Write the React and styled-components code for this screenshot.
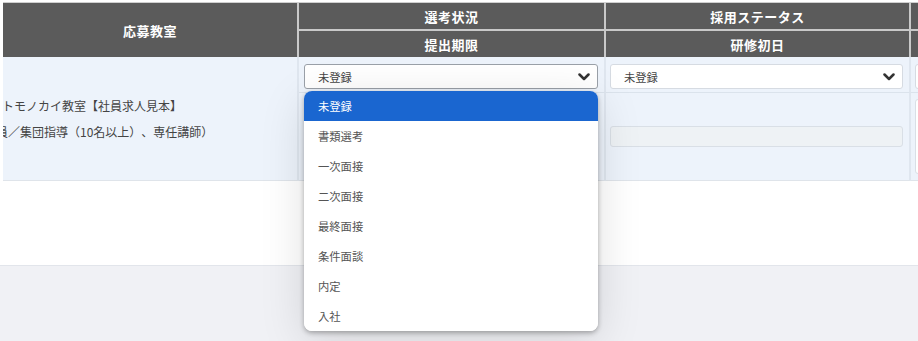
import React from "react";
import styled, { createGlobalStyle } from "styled-components";

const GlobalStyle = createGlobalStyle`
  html, body {
    margin: 0;
    padding: 0;
    background: #fff;
    font-family: "Noto Sans CJK JP", "Noto Sans", sans-serif;
    color: #444;
    text-spacing-trim: space-all;
  }
`;

const Page = styled.div`
  width: 918px;
  height: 341px;
  overflow: hidden;
  background: #fff;
  display: flex;
  flex-direction: column;
`;

const TableArea = styled.div`
  padding: 2px 0 0 3px;
`;

const Table = styled.table`
  border-collapse: separate;
  border-spacing: 0;
  table-layout: fixed;
  width: 1230px;
  border-top: 1px solid #cfcfcf;
`;

const Th = styled.th`
  background: #5b5b5b;
  color: #fff;
  font-size: 13px;
  font-weight: 700;
  height: 26px;
  padding: 0;
  text-align: center;
  border-right: 2px solid #c9c9c9;
  border-bottom: ${p => (p.$top ? "2px solid #c9c9c9" : "none")};
  letter-spacing: 0.5px;
`;

const Td = styled.td`
  background: #edf3fb;
  padding: ${p => p.$pad || "0 5px"};
  vertical-align: ${p => p.$align || "middle"};
  border-right: 2px solid #dfe6ef;
  border-bottom: ${p => (p.$sep ? "1px solid #dbe3ec" : "1px solid #dfe4ea")};
  height: ${p => p.$h}px;
  box-sizing: border-box;
`;

const ClassCell = styled(Td)`
  padding: 0;
  overflow: hidden;
  font-size: 12px;
  color: #444;
`;

const ClassLine = styled.div`
  white-space: nowrap;
  line-height: 26px;
  margin-left: ${p => p.$shift}px;
`;

const SelectWrap = styled.div`
  position: relative;
`;

const SelectBox = styled.div`
  height: 25px;
  box-sizing: border-box;
  background: #fff;
  border: 1px solid ${p => (p.$focus ? "#9aa0a8" : "#d6dbe2")};
  border-radius: 3px;
  display: flex;
  align-items: center;
  justify-content: space-between;
  padding: 0 7px 0 13px;
  font-size: 11.3px;
  color: #444;
`;

const DisabledInput = styled.div`
  height: 21px;
  box-sizing: border-box;
  background: #eef2f5;
  border: 1px solid #d9dfe6;
  border-radius: 3px;
`;

const TextBox = styled.div`
  height: 75px;
  box-sizing: border-box;
  background: #fff;
  border: 1px solid #d9dfe6;
  border-radius: 3px;
`;

const Menu = styled.ul`
  position: absolute;
  top: 27px;
  left: 0;
  right: 0;
  margin: 0;
  padding: 0;
  list-style: none;
  background: #fff;
  border-radius: 8px;
  overflow: hidden;
  z-index: 10;
  box-shadow: 0 2px 5px rgba(0, 0, 0, 0.3), 0 10px 45px rgba(0, 0, 0, 0.13);
`;

const MenuItem = styled.li`
  height: 30px;
  display: flex;
  align-items: center;
  padding-left: 14px;
  font-size: 11.3px;
  color: ${p => (p.$active ? "#fff" : "#555")};
  background: ${p => (p.$active ? "#1a66d0" : "#fff")};
`;

const Blank = styled.div`
  height: 84px;
  background: #fff;
`;

const Footer = styled.div`
  flex: 1;
  background: #f0f1f5;
  border-top: 1px solid #e2e5eb;
`;

const Chevron = () => (
  <svg width="12" height="8" viewBox="0 0 12 8">
    <polyline points="1.5,1.5 6,6 10.5,1.5" fill="none" stroke="#333" strokeWidth="2.5" strokeLinecap="round" strokeLinejoin="round" />
  </svg>
);

const options = ["未登録", "書類選考", "一次面接", "二次面接", "最終面接", "条件面談", "内定", "入社"];

export default function App() {
  return (
    <Page>
      <GlobalStyle />
      <TableArea>
        <Table>
          <colgroup>
            <col style={{ width: 296 }} />
            <col style={{ width: 307 }} />
            <col style={{ width: 305 }} />
            <col />
          </colgroup>
          <thead>
            <tr>
              <Th rowSpan={2}>応募教室</Th>
              <Th $top>選考状況</Th>
              <Th $top>採用ステータス</Th>
              <Th $top></Th>
            </tr>
            <tr>
              <Th>提出期限</Th>
              <Th>研修初日</Th>
              <Th></Th>
            </tr>
          </thead>
          <tbody>
            <tr>
              <ClassCell rowSpan={2}>
                <ClassLine $shift={-1}>トモノカイ教室【社員求人見本】</ClassLine>
                <ClassLine $shift={-7}>員／集団指導（10名以上）、専任講師）</ClassLine>
              </ClassCell>
              <Td $h={36} $sep $align="top" $pad="7px 6px 0 5px">
                <SelectWrap>
                  <SelectBox $focus>
                    未登録
                    <Chevron />
                  </SelectBox>
                  <Menu>
                    {options.map((o, i) => (
                      <MenuItem key={o} $active={i === 0}>{o}</MenuItem>
                    ))}
                  </Menu>
                </SelectWrap>
              </Td>
              <Td $h={36} $sep $align="top" $pad="7px 6px 0 4px">
                <SelectBox>
                  未登録
                  <Chevron />
                </SelectBox>
              </Td>
              <Td $h={36} $sep $align="top" $pad="7px 4px 0">
                <SelectBox />
              </Td>
            </tr>
            <tr>
              <Td $h={88} />
              <Td $h={88} $pad="0 6px 0 4px">
                <DisabledInput />
              </Td>
              <Td $h={88} $pad="0 4px">
                <TextBox />
              </Td>
            </tr>
          </tbody>
        </Table>
      </TableArea>
      <Blank />
      <Footer />
    </Page>
  );
}
